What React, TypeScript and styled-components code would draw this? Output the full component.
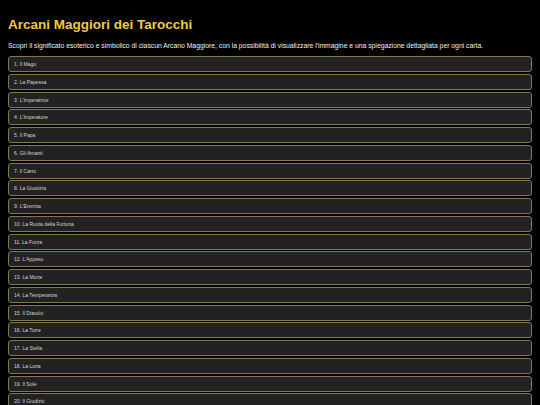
import styled, { createGlobalStyle } from "styled-components";

const GlobalStyle = createGlobalStyle`
  html, body {
    margin: 0;
    padding: 0;
    background: #000;
  }
  body {
    font-family: "Liberation Sans", Arial, sans-serif;
  }
`;

const Page = styled.main`
  padding: 8px;
  color: #e6e6e6;
`;

const Title = styled.h1`
  margin: 9px 0 0;
  font-size: 13.5px;
  line-height: 15px;
  font-weight: 700;
  color: #f2c94c;
`;

const Intro = styled.p`
  margin: 10px 0 6px;
  font-size: 6.8px;
  line-height: 8px;
  color: #f0f0f0;
`;

const CardList = styled.ul`
  list-style: none;
  margin: 0;
  padding: 0;
  display: flex;
  flex-direction: column;
  gap: 1.75px;
`;

const Card = styled.li`
  box-sizing: border-box;
  height: 16px;
  display: flex;
  align-items: center;
  padding: 0 5px;
  background: #222;
  border: 1px solid #857650;
  border-radius: 3px;
  font-size: 5.05px;
  color: #d4d4d4;
  cursor: pointer;
`;

const arcani = [
  "Il Mago",
  "La Papessa",
  "L'Imperatrice",
  "L'Imperatore",
  "Il Papa",
  "Gli Amanti",
  "Il Carro",
  "La Giustizia",
  "L'Eremita",
  "La Ruota della Fortuna",
  "La Forza",
  "L'Appeso",
  "La Morte",
  "La Temperanza",
  "Il Diavolo",
  "La Torre",
  "La Stella",
  "La Luna",
  "Il Sole",
  "Il Giudizio",
  "Il Mondo",
  "Il Matto",
];

const App = () => {
  return (
    <>
      <GlobalStyle />
      <Page>
        <Title>Arcani Maggiori dei Tarocchi</Title>
        <Intro>
          Scopri il significato esoterico e simbolico di ciascun Arcano
          Maggiore, con la possibilità di visualizzare l'immagine e una
          spiegazione dettagliata per ogni carta.
        </Intro>
        <CardList>
          {arcani.map((name, i) => (
            <Card key={name}>
              {i + 1}. {name}
            </Card>
          ))}
        </CardList>
      </Page>
    </>
  );
};

export default App;
